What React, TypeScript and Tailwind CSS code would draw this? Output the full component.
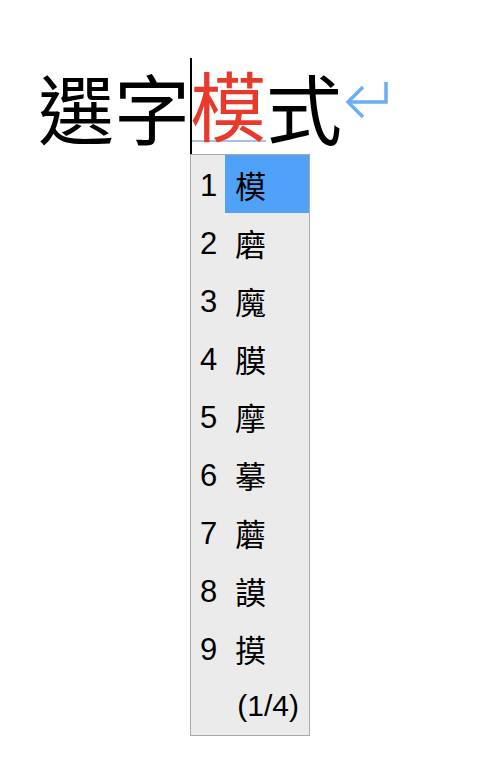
const candidates = ["模", "磨", "魔", "膜", "摩", "摹", "蘑", "謨", "摸"];

function ReturnArrow() {
  return (
    <svg width="48" height="40" viewBox="0 0 48 40" className="ml-[2px] mt-[14px]" fill="none">
      <path d="M42 2 V22 H5" stroke="#6aaef5" strokeWidth="3.5" />
      <path d="M19 7 L4 22 L19 37" stroke="#6aaef5" strokeWidth="3.5" />
    </svg>
  );
}

export default function App() {
  const font = { fontFamily: '"Noto Sans CJK TC", "Liberation Sans", sans-serif' };
  const latin = { fontFamily: '"Liberation Sans", sans-serif' };
  return (
    <div className="min-h-[768px] w-[492px] bg-white" style={font}>
      <div className="flex items-start pl-[38px] pt-[66px]">
        <span className="text-[76px] leading-[80px] text-black">選字</span>
        <div className="relative">
          <span className="block border-b-2 border-[#a9bfe3] text-[76px] leading-[74px] text-[#e8392b]">模</span>
          <div className="absolute left-0 top-[-8px] h-[96px] w-[2px] bg-black" />
          <div className="absolute left-0 top-[88px] w-[120px] border border-[#a9a9a9] bg-[#ebebeb]">
            {candidates.map((c, i) => (
              <div key={c} className="flex h-[58px] items-center">
                <span className="mt-[3px] w-[34px] pl-[9px] text-[31px] leading-none text-black" style={latin}>
                  {i + 1}
                </span>
                <span className={`flex h-full flex-1 items-center pl-[10px] text-[31px] leading-none text-black ${i === 0 ? "bg-[#4fa2f7]" : ""}`}>
                  {c}
                </span>
              </div>
            ))}
            <div className="flex h-[58px] items-center justify-end pr-[10px] text-[30px] leading-none text-black" style={latin}>
              (1/4)
            </div>
          </div>
        </div>
        <span className="text-[76px] leading-[80px] text-black">式</span>
        <ReturnArrow />
      </div>
    </div>
  );
}
